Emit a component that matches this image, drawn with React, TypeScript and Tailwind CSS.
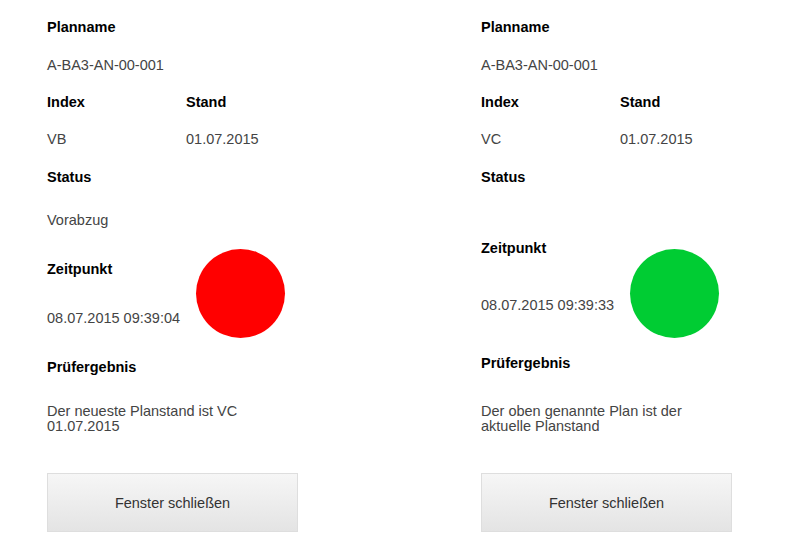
import React from "react";

type Row = { text: string; bold?: boolean; h: string };

type Panel = {
  index: string;
  middle: Row[];
  circle: string;
  result: string[];
};

const panels: Panel[] = [
  {
    index: "VB",
    middle: [
      { text: "Vorabzug", h: "h-[49px]" },
      { text: "Zeitpunkt", bold: true, h: "h-[49px]" },
      { text: "08.07.2015 09:39:04", h: "h-[49px]" },
      { text: "Prüfergebnis", bold: true, h: "h-[49px]" },
    ],
    circle: "bg-[#ff0000]",
    result: ["Der neueste Planstand ist VC", "01.07.2015"],
  },
  {
    index: "VC",
    middle: [
      { text: "", h: "h-[28px]" },
      { text: "Zeitpunkt", bold: true, h: "h-[48px]" },
      { text: "08.07.2015 09:39:33", h: "h-[66px]" },
      { text: "Prüfergebnis", bold: true, h: "h-[50px]" },
    ],
    circle: "bg-[#00cc33]",
    result: ["Der oben genannte Plan ist der", "aktuelle Planstand"],
  },
];

function Label({ children }: { children: React.ReactNode }) {
  return <span className="font-bold text-black">{children}</span>;
}

function Value({ children }: { children: React.ReactNode }) {
  return <span className="text-[#444]">{children}</span>;
}

function PlanPanel({ p }: { p: Panel }) {
  return (
    <div className="w-[434px] shrink-0 flex flex-col pt-[7px]">
      <div className="h-[38px] pt-[3px] flex items-center">
        <Label>Planname</Label>
      </div>
      <div className="h-[38px] pt-[3px] flex items-center">
        <Value>A-BA3-AN-00-001</Value>
      </div>
      <div className="h-[37px] pt-[3px] flex items-center">
        <div className="w-[139px]">
          <Label>Index</Label>
        </div>
        <Label>Stand</Label>
      </div>
      <div className="h-[37px] pt-[3px] flex items-center">
        <div className="w-[139px]">
          <Value>{p.index}</Value>
        </div>
        <Value>01.07.2015</Value>
      </div>
      <div className="h-[38px] pt-[3px] flex items-center">
        <Label>Status</Label>
      </div>

      {/* status value / time / traffic light */}
      <div className="h-[196px] flex items-center">
        <div className="w-[149px] flex flex-col self-start">
          {p.middle.map((r, i) => (
            <div key={i} className={`${r.h} pt-[3px] flex items-center`}>
              {r.bold ? <Label>{r.text}</Label> : <Value>{r.text}</Value>}
            </div>
          ))}
        </div>
        <div className={`w-[89px] h-[89px] rounded-full ${p.circle}`} />
      </div>

      <div className="mt-[13px] leading-[15px] text-[#444]">
        {p.result.map((l) => (
          <div key={l}>{l}</div>
        ))}
      </div>

      <button className="mt-[39px] w-[251px] h-[59px] pt-[3px] border border-[#dedede] bg-gradient-to-b from-[#f6f6f6] to-[#e4e4e4] text-[#333]">
        Fenster schließen
      </button>
    </div>
  );
}

export default function App() {
  return (
    <div className="w-[796px] h-[552px] bg-white overflow-hidden flex pl-[47px] text-[14.5px] font-['Liberation_Sans',Arial,sans-serif]">
      {panels.map((p) => (
        <PlanPanel key={p.index} p={p} />
      ))}
    </div>
  );
}
